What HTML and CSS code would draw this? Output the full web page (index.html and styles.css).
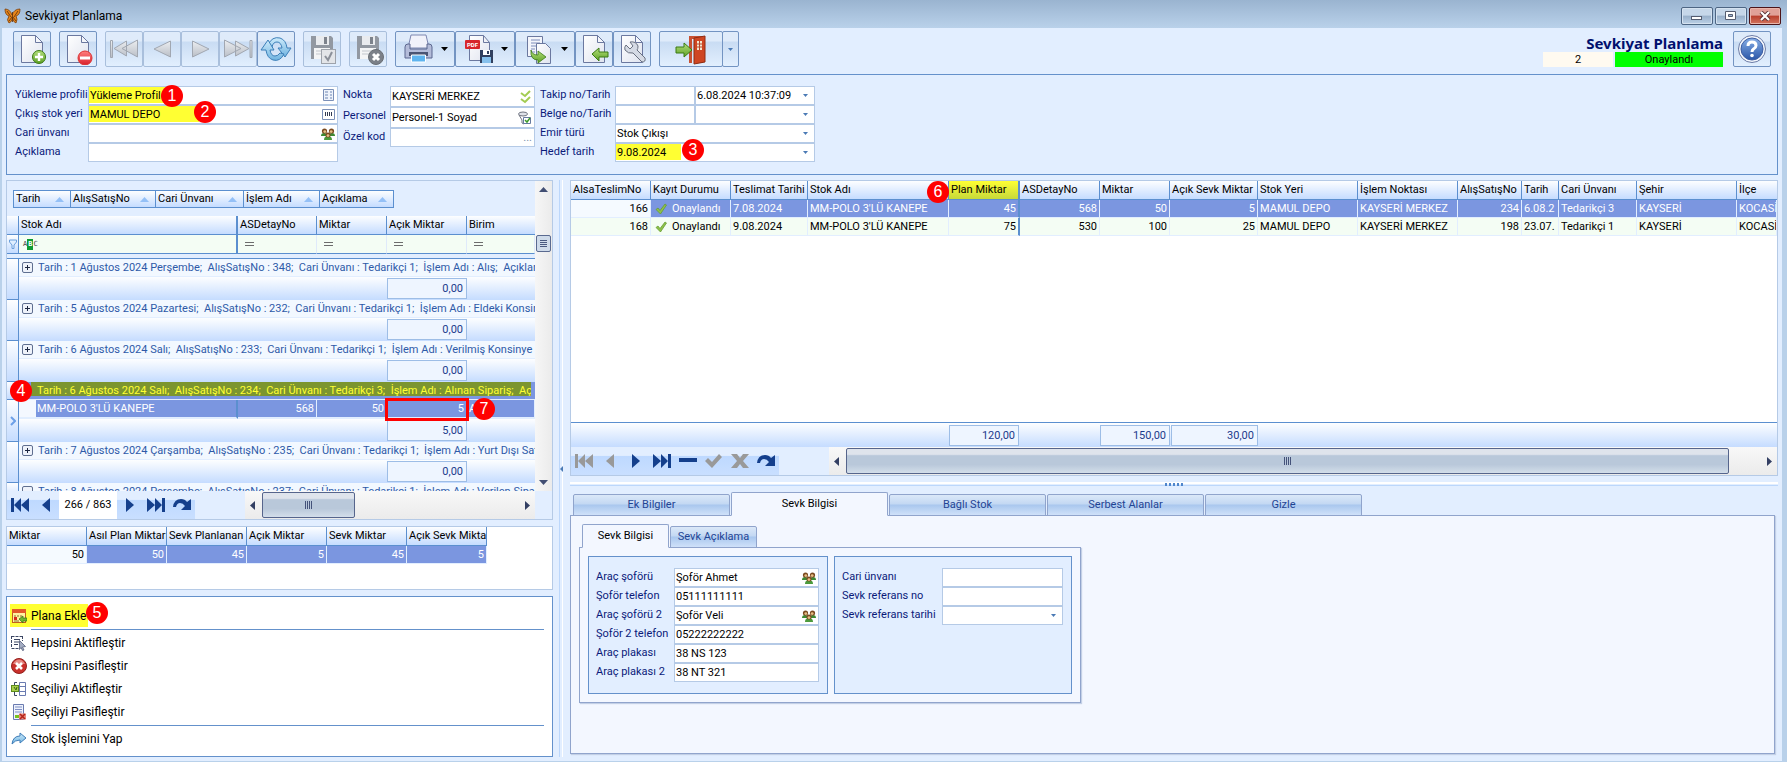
FILE: index.html
```html
<!DOCTYPE html>
<html lang="tr">
<head>
    <meta charset="UTF-8" />
    <title>Sevkiyat Planlama</title>
    <link rel="stylesheet" href="styles.css">
</head>
<body>

<!-- shared icons -->
<svg class="defs" width="0" height="0">
    <defs>
    <linearGradient id="g-page" x1="0" y1="0" x2="1" y2="1"><stop offset="0" stop-color="#fff"/><stop offset="1" stop-color="#dfe3ee"/></linearGradient>
    <linearGradient id="g-green" x1="0" y1="0" x2="0" y2="1"><stop offset="0" stop-color="#b5e07c"/><stop offset="1" stop-color="#5da025"/></linearGradient>
    <linearGradient id="g-red" x1="0" y1="0" x2="0" y2="1"><stop offset="0" stop-color="#ff8080"/><stop offset="1" stop-color="#d81f2a"/></linearGradient>
    <linearGradient id="g-blue" x1="0" y1="0" x2="0" y2="1"><stop offset="0" stop-color="#cdebfb"/><stop offset="1" stop-color="#6fb3e0"/></linearGradient>
    <linearGradient id="g-grey" x1="0" y1="0" x2="0" y2="1"><stop offset="0" stop-color="#eceef1"/><stop offset="1" stop-color="#b9bec6"/></linearGradient>
    <linearGradient id="g-help" x1="0" y1="0" x2="0" y2="1"><stop offset="0" stop-color="#86aee6"/><stop offset="1" stop-color="#2a56a8"/></linearGradient>
    </defs>
    <symbol id="i-down" viewBox="0 0 5 3"><path d="M0 0h5L2.500 3z"/></symbol>
    <symbol id="i-up" viewBox="0 0 9 5"><path d="M4.500 0L9 5H0z"/></symbol>
    <symbol id="i-page" viewBox="0 0 32 32"><path d="M5.500 2.500h14l7 7v20h-21z" fill="url(#g-page)" stroke="#6b789f"/><path d="M19.500 2.500v7h7z" fill="#f4f6fb" stroke="#6b789f"/></symbol>
    <symbol id="i-people" viewBox="0 0 14 12"><path d="M0 8q0-3 3-3t3 3z" fill="#3d8a34"/><path d="M8 8q0-3 3-3t3 3z" fill="#3d8a34"/><circle cx="3.500" cy="3" r="2.600" fill="#7a4a20"/><circle cx="10.500" cy="3" r="2.600" fill="#7a4a20"/><circle cx="3.800" cy="3.600" r="1.400" fill="#e6bd84"/><circle cx="10.200" cy="3.600" r="1.400" fill="#e6bd84"/><path d="M3 12q0-4 4-4t4 4z" fill="#4b9a3c"/><circle cx="7" cy="7" r="2.500" fill="#79491f"/><circle cx="7" cy="7.600" r="1.400" fill="#e6bd84"/></symbol>
    <symbol id="i-check" viewBox="0 0 12 12"><path d="M1 6.500l2-1.500 2 2.500L10 1l1.500 1L5.500 11z" fill="#8fc04a" stroke="#5f9a2c" stroke-width=".7"/></symbol>
    <symbol id="i-plus" viewBox="0 0 11 11"><rect x=".5" y=".5" width="10" height="10" rx="1.500" fill="#eef2fa" stroke="#5f6f90"/><path d="M3 5.500h5M5.500 3v5" stroke="#1d2740"/></symbol>
    <symbol id="i-minus" viewBox="0 0 11 11"><rect x=".5" y=".5" width="10" height="10" rx="1.500" fill="#eef2fa" stroke="#5f6f90"/><path d="M3 5.500h5" stroke="#1d2740"/></symbol>
    <symbol id="i-floppy" viewBox="0 0 32 32"><path d="M5 3h20l2 2v21H5z" fill="#9298a1"/><path d="M10 3h13v9H10z" fill="#e9ebee"/><path d="M18 4h3v7h-3z" fill="#7d838c"/><path d="M8 15h16v11H8z" fill="#f4f5f6"/><path d="M10 18h12M10 21h12" stroke="#c3c7cd"/></symbol>
    <symbol id="n-first" viewBox="0 0 20 16"><path d="M1 1h3v14H1zM4 8l7-7v14zM11 8l8-7v14z"/></symbol>
    <symbol id="n-prev" viewBox="0 0 20 16"><path d="M6 8l8-7v14z"/></symbol>
    <symbol id="n-next" viewBox="0 0 20 16"><path d="M6 1l8 7-8 7z"/></symbol>
    <symbol id="n-last" viewBox="0 0 20 16"><path d="M16 1h3v14h-3zM1 1l8 7-8 7zM9 1l7 7-7 7z"/></symbol>
    <symbol id="n-redo" viewBox="0 0 20 16"><path d="M1 10Q2 2 9 2q4 0 6 3l4-3v11H9l4-4q-2-3-5-3-3 0-4 4z"/></symbol>
    <symbol id="i-eq" viewBox="0 0 9 4"><path d="M0 .5h9M0 3.500h9" stroke="#6c6c6c"/></symbol>
</svg>

<div class="window">
    <header class="titlebar">
        <svg width="17" height="16" viewBox="0 0 17 16"><path d="M1 1q5 0 7 6Q10 1 16 1q0 6-4 7 2 3 0 7-3-1-3.500-5Q8 14 5 15 2 12 5 8 1 7 1 1z" fill="#e8861a" stroke="#7a3d0a" stroke-width=".8"/><path d="M8.500 4v10M3 3l4 6M14 3l-4 6M5 13l3-4M12 13l-3-4" stroke="#5a2c08" stroke-width=".8"/></svg>
        <span class="app-name">Sevkiyat Planlama</span>
        <button class="win-btn" aria-label="Simge durumu"><svg width="12" height="10" viewBox="0 0 12 10"><rect x=".5" y="5.500" width="10" height="3" fill="#fff" stroke="#555d70"/></svg></button>
        <button class="win-btn" aria-label="Ekranı kapla"><svg width="12" height="10" viewBox="0 0 12 10"><path d="M.5.500h10v8H.5z" fill="#fff" stroke="#555d70"/><path d="M3.500 3.500h4v2h-4z" fill="#9fb6cf" stroke="#555d70"/></svg></button>
        <button class="win-btn close" aria-label="Kapat"><svg width="12" height="10" viewBox="0 0 12 10"><path d="M2 1l8 8M10 1L2 9" stroke="#5b3034" stroke-width="4"/><path d="M2 1l8 8M10 1L2 9" stroke="#fff" stroke-width="2.200"/></svg></button>
    </header>

    <!-- toolbar -->
    <div class="toolbar">
        <button class="tool" aria-label="Yeni"><svg width="32" height="32"><use href="#i-page"/><circle cx="23" cy="24" r="6.500" fill="url(#g-green)" stroke="#3b7a14"/><path d="M23 20v8M19 24h8" stroke="#fff" stroke-width="2.400"/></svg></button>
        <button class="tool" aria-label="Sil"><svg width="32" height="32"><use href="#i-page"/><circle cx="23" cy="25" r="7" fill="url(#g-red)" stroke="#d33"/><path d="M18 25h10" stroke="#fff" stroke-width="3"/></svg></button>
        <div class="tool-group">
            <button class="tool off" aria-label="İlk"><svg width="32" height="32"><path d="M2.500 7.500h2v17h-2zM18.500 8v15L6 15.500zM29.500 7v17L14 15.500z" fill="url(#g-grey)" stroke="#a1a7b1"/></svg></button>
            <button class="tool off" aria-label="Önceki"><svg width="32" height="32"><path d="M24.500 8v16L8 16z" fill="url(#g-grey)" stroke="#a1a7b1"/></svg></button>
            <button class="tool off" aria-label="Sonraki"><svg width="32" height="32"><path d="M8.500 8v16L25 16z" fill="url(#g-grey)" stroke="#a1a7b1"/></svg></button>
            <button class="tool off" aria-label="Son"><svg width="32" height="32"><path d="M28 7.500h2v17h-2zM13.500 8v15L27 15.500zM2.500 7v17L19 15.500z" fill="url(#g-grey)" stroke="#a1a7b1"/></svg></button>
            <button class="tool" aria-label="Yenile"><svg width="32" height="32"><path d="M8 12Q12 3 20 5q6 2 7 10h4l-6 9-7-9h4q-1-6-5-6-4 0-5 5z" fill="url(#g-blue)" stroke="#3c7fb8"/><path d="M24 21q-4 8-11 6-6-2-7-10H1l7-10 6 10h-4q1 6 5 6 3 0 5-3z" fill="url(#g-blue)" stroke="#3c7fb8"/></svg></button>
        </div>
        <button class="tool off" aria-label="Kaydet"><svg width="32" height="32"><use href="#i-floppy"/><rect x="15.500" y="16.500" width="14" height="14" fill="#e3e5e8" stroke="#9ea3ab"/><path d="M19 23l3 4 4-8" fill="none" stroke="#8b9099" stroke-width="2"/></svg></button>
        <button class="tool off" aria-label="İptal"><svg width="32" height="32"><use href="#i-floppy"/><circle cx="24" cy="24" r="7.500" fill="#7b8088" stroke="#6a6f76"/><path d="M21 21l6 6M27 21l-6 6" stroke="#fff" stroke-width="3"/></svg></button>
        <div class="tool-group">
            <button class="tool wide" aria-label="Yazdır"><svg width="32" height="32"><path d="M9 2h15l3 13H6z" fill="#f1f2fa" stroke="#7d86b0"/><path d="M3 14q0-3 3-3h2v5h17v-5h2q3 0 3 3v11H3z" fill="#b4bcd9" stroke="#5b678f"/><path d="M7 19h19v4H7z" fill="#4a5473"/><path d="M9.500 22h14v7h-14z" fill="#5fb4ef" stroke="#fff"/></svg><svg class="caret" width="7" height="4"><path d="M0 0h7L3.500 4z"/></svg></button>
            <button class="tool wide" aria-label="PDF kaydet"><svg width="32" height="32"><path d="M7.500 2.500h14l6 7v18h-20z" fill="url(#g-page)" stroke="#6b789f"/><path d="M21.500 2.500v7h6" fill="none" stroke="#6b789f"/><rect x="3" y="7" width="15" height="9" rx="1" fill="#d7262c"/><text x="5" y="14" class="pdf">PDF</text><path d="M18 17h13v13H18z" fill="#31405f"/><path d="M21 17h7v5h-7z" fill="#fff"/><path d="M20 24h9v6h-9z" fill="#86c0ec"/><path d="M25 18h2v3h-2z" fill="#31405f"/></svg><svg class="caret" width="7" height="4"><path d="M0 0h7L3.500 4z"/></svg></button>
            <button class="tool wide" aria-label="Kopyala"><svg width="32" height="32"><path d="M5.500 3.500h15v20h-15z" fill="#f3f5fb" stroke="#6b789f"/><path d="M9 7h9M9 10h9M9 13h5M9 16h4M9 19h4" stroke="#7d8cba"/><path d="M14.500 10.500h9l5 5v15h-14z" fill="url(#g-page)" stroke="#6b789f"/><path d="M9 17q1 5 7 5v-4l8 6-8 6v-3Q8 27 9 17z" fill="url(#g-green)" stroke="#3b7a14" stroke-width=".8"/></svg><svg class="caret" width="7" height="4"><path d="M0 0h7L3.500 4z"/></svg></button>
            <button class="tool" aria-label="İçe aktar"><svg width="32" height="32"><use href="#i-page"/><path d="M14 21l7-6v4h9v5h-9v4z" fill="url(#g-green)" stroke="#3b7a14"/></svg></button>
            <button class="tool" aria-label="Ayarlar"><svg width="32" height="32"><use href="#i-page"/><path d="M10 12l4 4 3-3-3-4q6-1 8 4 0 3-1 4l8 8q1 4-3 4l-9-9q-5 1-8-3-1-3 1-5z" fill="#d5dae4" stroke="#6a7180"/></svg></button>
        </div>
        <div class="tool-group">
            <button class="tool exit" aria-label="Çıkış"><svg width="32" height="32"><path d="M14 3h14v27h-3V6h-8v24h-3z" fill="#c85032"/><path d="M19 5l11-2v26l-11 2z" fill="#cf4623" stroke="#8f2c13"/><path d="M22 8h5v9h-5z" fill="#f3e6cf"/><path d="M24.500 8v9M22 11h5M22 14h5" stroke="#b5482c"/><path d="M1 14h8v-4l8 7-8 7v-4H1z" fill="url(#g-green)" stroke="#3b7a14"/></svg></button>
            <button class="tool drop" aria-label="Diğer"><svg class="arrow" width="5" height="3"><use href="#i-down"/></svg></button>
        </div>
        <div class="status">
            <h1>Sevkiyat Planlama</h1>
            <div class="status-row"><span class="count">2</span><span class="state">Onaylandı</span></div>
        </div>
        <button class="tool" aria-label="Yardım"><svg width="32" height="32"><circle cx="16" cy="16" r="13.500" fill="#f4f7fc" stroke="#6b7ba6"/><circle cx="16" cy="16" r="11" fill="url(#g-help)" stroke="#3f5fa3"/><path d="M12 13q0-4 4-4t4 3.500q0 2-2.500 3.500-1.500 1-1.500 3" fill="none" stroke="#fff" stroke-width="3"/><circle cx="16" cy="22.500" r="1.800" fill="#fff"/></svg></button>
    </div>

    <!-- header form -->
    <form class="box head-form">
        <div class="form-col col-a">
            <label for="profil">Yükleme profili</label>
            <div class="field"><input id="profil" class="mark mark-s" value="Yükleme Profil"><svg width="12" height="13"><path d="M.5.5h10v11H.5z" fill="#eef3fb" stroke="#7b90b8"/><path d="M2 3h3M7 3h2M2 6h3M7 6h2M2 9h3M7 9h2" stroke="#6f86b3"/></svg><span class="badge b1">1</span></div>
            <label for="cikis">Çıkış stok yeri</label>
            <div class="field"><input id="cikis" class="mark mark-l" value="MAMUL DEPO"><svg width="13" height="11"><path d="M.5.5h12v10H.5z" fill="#fff" stroke="#7b90b8"/><path d="M3.500 3v4M5.500 3v4M7.500 3v4M9.500 3v4" stroke="#333b52"/></svg><span class="badge b2">2</span></div>
            <label for="cari">Cari ünvanı</label>
            <div class="field"><input id="cari"><svg width="14" height="12"><use href="#i-people"/></svg></div>
            <label for="aciklama">Açıklama</label>
            <div class="field"><input id="aciklama"></div>
        </div>
        <div class="form-col col-b">
            <label for="nokta">Nokta</label>
            <div class="field"><input id="nokta" value="KAYSERİ MERKEZ"><svg width="12" height="14"><path d="M1 3l4 3 5-5M1 9l4 3 5-5" fill="none" stroke="#a3cc52" stroke-width="2"/></svg></div>
            <label for="personel">Personel</label>
            <div class="field"><input id="personel" value="Personel-1 Soyad"><svg width="14" height="14"><ellipse cx="5" cy="3" rx="4.500" ry="2" fill="#dfe2e8" stroke="#6f7480"/><path d="M1 4l3 5v3l2 1V9" fill="none" stroke="#6f7480"/><path d="M5.500 6.500h7v6h-7z" fill="#fff" stroke="#667aa0"/><path d="M7 9l2 2 3-4" fill="none" stroke="#3c9a28" stroke-width="1.500"/></svg></div>
            <label for="ozel">Özel kod</label>
            <div class="field last"><input id="ozel"><span class="dots">...</span></div>
        </div>
        <div class="form-col col-c">
            <label for="takip">Takip no/Tarih</label>
            <div class="pair">
                <div class="field"><input id="takip"></div>
                <div class="field"><input aria-label="Takip tarihi" value="6.08.2024 10:37:09"><svg class="arrow" width="5" height="3"><use href="#i-down"/></svg></div>
            </div>
            <label for="belge">Belge no/Tarih</label>
            <div class="pair">
                <div class="field"><input id="belge"></div>
                <div class="field"><input aria-label="Belge tarihi"><svg class="arrow" width="5" height="3"><use href="#i-down"/></svg></div>
            </div>
            <label for="emir">Emir türü</label>
            <div class="field"><select id="emir"><option>Stok Çıkışı</option></select><svg class="arrow" width="5" height="3"><use href="#i-down"/></svg></div>
            <label for="hedef">Hedef tarih</label>
            <div class="field"><input id="hedef" class="mark mark-d" value="9.08.2024"><svg class="arrow" width="5" height="3"><use href="#i-down"/></svg><span class="badge b3">3</span></div>
        </div>
    </form>

    <main class="workspace">
        <div class="left">

            <!-- orders grouped by date -->
            <section class="panel orders">
                <div class="orders-body">
                    <div class="orders-grid">
                        <div class="group-by">
                            <button class="gb-1">Tarih<svg width="9" height="5"><use href="#i-up"/></svg></button>
                            <button class="gb-2">AlışSatışNo<svg width="9" height="5"><use href="#i-up"/></svg></button>
                            <button class="gb-3">Cari Ünvanı<svg width="9" height="5"><use href="#i-up"/></svg></button>
                            <button class="gb-4">İşlem Adı<svg width="9" height="5"><use href="#i-up"/></svg></button>
                            <button class="gb-5">Açıklama<svg width="9" height="5"><use href="#i-up"/></svg></button>
                        </div>
                        <table class="grid orders-table">
                            <colgroup><col class="w12"><col class="w218"><col class="w79"><col class="w70"><col class="w80"><col></colgroup>
                            <thead>
                                <tr><th></th><th class="fix">Stok Adı</th><th>ASDetayNo</th><th>Miktar</th><th>Açık Miktar</th><th>Birim</th></tr>
                                <tr class="filter"><td class="ind"><svg width="8" height="10"><path d="M.5 1h7v2L5 6v3.500H3V6L.5 3z" fill="#dfeeff" stroke="#6da0dc"/></svg></td><td class="fix"><span class="abc">A<b>B</b>C</span></td><td><svg width="9" height="4"><use href="#i-eq"/></svg></td><td><svg width="9" height="4"><use href="#i-eq"/></svg></td><td><svg width="9" height="4"><use href="#i-eq"/></svg></td><td><svg width="9" height="4"><use href="#i-eq"/></svg></td></tr>
                            </thead>
                            <tbody>
                                <tr class="spacer"><td colspan="6"></td></tr>
                                <tr class="group"><td class="ind" rowspan="2"></td><td colspan="5"><svg width="11" height="11"><use href="#i-plus"/></svg>Tarih : 1 Ağustos 2024 Perşembe;&nbsp; AlışSatışNo : 348;&nbsp; Cari Ünvanı : Tedarikçi 1;&nbsp; İşlem Adı : Alış;&nbsp; Açıklama</td></tr>
                                <tr class="foot"><td colspan="3"></td><td><span class="sum">0,00</span></td><td></td></tr>
                                <tr class="group"><td class="ind" rowspan="2"></td><td colspan="5"><svg width="11" height="11"><use href="#i-plus"/></svg>Tarih : 5 Ağustos 2024 Pazartesi;&nbsp; AlışSatışNo : 232;&nbsp; Cari Ünvanı : Tedarikçi 1;&nbsp; İşlem Adı : Eldeki Konsinye</td></tr>
                                <tr class="foot"><td colspan="3"></td><td><span class="sum">0,00</span></td><td></td></tr>
                                <tr class="group"><td class="ind" rowspan="2"></td><td colspan="5"><svg width="11" height="11"><use href="#i-plus"/></svg>Tarih : 6 Ağustos 2024 Salı;&nbsp; AlışSatışNo : 233;&nbsp; Cari Ünvanı : Tedarikçi 1;&nbsp; İşlem Adı : Verilmiş Konsinye Satış</td></tr>
                                <tr class="foot"><td colspan="3"></td><td><span class="sum">0,00</span></td><td></td></tr>
                                <tr class="group open"><td class="ind"><span class="badge b4">4</span></td><td colspan="5"><div class="olive">Tarih : 6 Ağustos 2024 Salı;&nbsp; AlışSatışNo : 234;&nbsp; Cari Ünvanı : Tedarikçi 3;&nbsp; İşlem Adı : Alınan Sipariş;&nbsp; Açıklama</div></td></tr>
                                <tr class="detail"><td class="ind" rowspan="2"><svg width="6" height="10"><path d="M1 1l4 4-4 4" fill="none" stroke="#6da0e8" stroke-width="2"/></svg></td><td class="fix"><div class="name">MM-POLO 3'LÜ KANEPE</div></td><td>568</td><td>50</td><td class="framed">5<span class="badge b7">7</span></td><td class="unit">A</td></tr>
                                <tr class="foot"><td colspan="3"></td><td><span class="sum">5,00</span></td><td></td></tr>
                                <tr class="group"><td class="ind" rowspan="2"></td><td colspan="5"><svg width="11" height="11"><use href="#i-plus"/></svg>Tarih : 7 Ağustos 2024 Çarşamba;&nbsp; AlışSatışNo : 235;&nbsp; Cari Ünvanı : Tedarikçi 1;&nbsp; İşlem Adı : Yurt Dışı Satış</td></tr>
                                <tr class="foot"><td colspan="3"></td><td><span class="sum">0,00</span></td><td></td></tr>
                                <tr class="group"><td class="ind"></td><td colspan="5"><svg width="11" height="11"><use href="#i-minus"/></svg>Tarih : 8 Ağustos 2024 Perşembe;&nbsp; AlışSatışNo : 237;&nbsp; Cari Ünvanı : Tedarikçi 1;&nbsp; İşlem Adı : Verilen Sipariş</td></tr>
                            </tbody>
                        </table>
                    </div>
                    <div class="vscroll">
                        <svg width="9" height="5" viewBox="0 0 9 5"><path d="M4.500 0L9 5H0z"/></svg>
                        <span class="vthumb"></span>
                        <svg width="9" height="5" viewBox="0 0 9 5"><path d="M0 0h9L4.500 5z"/></svg>
                    </div>
                </div>
                <div class="nav-row">
                    <div class="navigator">
                        <button aria-label="İlk kayıt"><svg width="20" height="16"><use href="#n-first"/></svg></button>
                        <button aria-label="Önceki kayıt"><svg width="20" height="16"><use href="#n-prev"/></svg></button>
                        <span class="pos">266 / 863</span>
                        <button aria-label="Sonraki kayıt"><svg width="20" height="16"><use href="#n-next"/></svg></button>
                        <button aria-label="Son kayıt"><svg width="20" height="16"><use href="#n-last"/></svg></button>
                        <button aria-label="Yenile"><svg width="20" height="16"><use href="#n-redo"/></svg></button>
                    </div>
                    <div class="hscroll hs-left">
                        <svg width="5" height="9"><path d="M5 0v9L0 4.500z"/></svg>
                        <span class="hthumb"></span>
                        <svg width="5" height="9"><path d="M0 0v9l5-4.500z"/></svg>
                    </div>
                    <span class="corner"></span>
                </div>
            </section>

            <!-- quantity totals -->
            <section class="panel totals">
                <table class="grid totals-table">
                    <thead><tr><th>Miktar</th><th>Asıl Plan Miktarı</th><th>Sevk Planlanan Miktar</th><th>Açık Miktar</th><th>Sevk Miktar</th><th>Açık Sevk Miktar</th></tr></thead>
                    <tbody><tr class="sel"><td class="focus">50</td><td>50</td><td>45</td><td>5</td><td>45</td><td>5</td></tr></tbody>
                </table>
            </section>

            <!-- actions -->
            <nav class="actions">
                <button class="plan"><svg width="16" height="16"><rect x="1.500" y="1.500" width="13" height="13" fill="#fff2a0" stroke="#c2601c"/><path d="M1 1h14v4H1z" fill="#e2582a"/><path d="M3 8h2M6 8h2M3 11h2M9 8h2M3 13h5" stroke="#8a6d2b"/><path d="M3 9h3v3H3z" fill="#d92c1e"/><path d="M8 11l4-3v2h4v3h-4v2z" fill="#6db52f" stroke="#356f12" stroke-width=".7"/></svg>Plana Ekle<span class="badge b5">5</span></button>
                <hr>
                <button><svg width="16" height="16"><path d="M.5 1.500h11M.5 13.500h8M.5 1v12M11.500 1v5" stroke="#3b4663" stroke-dasharray="3 1"/><path d="M3 4.500h6M3 7h6M3 9.500h4" stroke="#3b4663"/><path d="M8.500 5.500l6 6-3 .5 1.500 3-1.500.5-1.500-3-1.500 2z" fill="#a3acc2" stroke="#56607c" stroke-width=".8"/></svg>Hepsini Aktifleştir</button>
                <button><svg width="16" height="16"><circle cx="8" cy="8" r="7.500" fill="#c9302c" stroke="#93211d"/><path d="M2 6q2-4.500 6-4.500T14 6z" fill="#e58a84"/><path d="M5 5l6 6M11 5l-6 6" stroke="#fff" stroke-width="2.600"/></svg>Hepsini Pasifleştir</button>
                <button><svg width="16" height="16"><path d="M8.500 1.500h6v13h-6zM8.500 5.500h6M8.500 10.500h6" fill="#fff" stroke="#6a7bb0"/><path d="M6 1.500H3.500v13H6" fill="none" stroke="#3b4663"/><rect x=".5" y="4.500" width="7" height="6" fill="#a9cf4c" stroke="#5c8a1d"/><path d="M3 6l2 3 1-3" fill="none" stroke="#3e6610"/></svg>Seçiliyi Aktifleştir</button>
                <button><svg width="16" height="16"><path d="M2.500.5h10v15h-10z" fill="#eef2fc" stroke="#6a7bb0"/><path d="M4 3h7M4 5.500h7M4 8h7" stroke="#7f8fc4"/><path d="M4 11h5v3H4z" fill="#79c21f"/><path d="M8 9.500h7v6H8z" fill="#e98a7c"/><path d="M9 10l5 5M14 10l-5 5" stroke="#b3241a" stroke-width="1.500"/></svg>Seçiliyi Pasifleştir</button>
                <hr>
                <button><svg width="16" height="16"><path d="M1 13Q2 5 9 5V2l6 5-6 5V9Q4 9 1 13z" fill="url(#g-blue)" stroke="#3f7db8"/></svg>Stok İşlemini Yap</button>
            </nav>
        </div>

        <div class="splitter-v"><svg width="3" height="6"><path d="M3 0v6L0 3z"/></svg></div>

        <div class="right">

            <!-- shipment plan grid -->
            <section class="panel plan-grid">
                <div class="plan-body">
                    <table class="grid plan-table">
                        <colgroup><col class="w80"><col class="w80"><col class="w77"><col class="w141"><col class="w71"><col class="w80"><col class="w70"><col class="w88"><col class="w100"><col class="w100"><col class="w64"><col class="w37"><col class="w78"><col class="w100"><col></colgroup>
                        <thead><tr><th>AlsaTeslimNo</th><th>Kayıt Durumu</th><th>Teslimat Tarihi</th><th>Stok Adı</th><th class="hot fix">Plan Miktar<span class="badge b6">6</span></th><th>ASDetayNo</th><th>Miktar</th><th>Açık Sevk Miktar</th><th>Stok Yeri</th><th>İşlem Noktası</th><th>AlışSatışNo</th><th>Tarih</th><th>Cari Ünvanı</th><th>Şehir</th><th>İlçe</th></tr></thead>
                        <tbody>
                            <tr class="sel"><td class="focus">166</td><td class="t"><svg width="12" height="12"><use href="#i-check"/></svg>Onaylandı</td><td class="t">7.08.2024</td><td class="t">MM-POLO 3'LÜ KANEPE</td><td class="fix">45</td><td>568</td><td>50</td><td>5</td><td class="t">MAMUL DEPO</td><td class="t">KAYSERİ MERKEZ</td><td>234</td><td class="t">6.08.2</td><td class="t">Tedarikçi 3</td><td class="t">KAYSERİ</td><td class="t">KOCASİNAN</td></tr>
                            <tr><td>168</td><td class="t"><svg width="12" height="12"><use href="#i-check"/></svg>Onaylandı</td><td class="t">9.08.2024</td><td class="t">MM-POLO 3'LÜ KANEPE</td><td class="fix">75</td><td>530</td><td>100</td><td>25</td><td class="t">MAMUL DEPO</td><td class="t">KAYSERİ MERKEZ</td><td>198</td><td class="t">23.07.</td><td class="t">Tedarikçi 1</td><td class="t">KAYSERİ</td><td class="t">KOCASİNAN</td></tr>
                        </tbody>
                    </table>
                </div>
                <div class="plan-foot">
                    <span class="sum s-plan">120,00</span>
                    <span class="sum s-miktar">150,00</span>
                    <span class="sum s-acik">30,00</span>
                </div>
                <div class="nav-row">
                    <div class="navigator nav-plan">
                        <button disabled aria-label="İlk kayıt"><svg width="20" height="16"><use href="#n-first"/></svg></button>
                        <button disabled aria-label="Önceki kayıt"><svg width="20" height="16"><use href="#n-prev"/></svg></button>
                        <button aria-label="Sonraki kayıt"><svg width="20" height="16"><use href="#n-next"/></svg></button>
                        <button aria-label="Son kayıt"><svg width="20" height="16"><use href="#n-last"/></svg></button>
                        <button aria-label="Kaydı sil"><svg width="20" height="16"><path d="M1 5h18v4H1z"/></svg></button>
                        <button disabled aria-label="Onayla"><svg width="20" height="16"><path d="M1 8l3-3 4 4 7-8 3 3L8 15z"/></svg></button>
                        <button disabled aria-label="Vazgeç"><svg width="20" height="16"><path d="M1 1h6l3 4 3-4h6l-6 7 6 7h-6l-3-4-3 4H1l6-7z"/></svg></button>
                        <button aria-label="Yenile"><svg width="20" height="16"><use href="#n-redo"/></svg></button>
                    </div>
                    <div class="hscroll hs-right">
                        <svg width="5" height="9"><path d="M5 0v9L0 4.500z"/></svg>
                        <span class="hthumb"></span>
                        <svg width="5" height="9"><path d="M0 0v9l5-4.500z"/></svg>
                    </div>
                </div>
            </section>

            <div class="splitter-h"><svg width="19" height="3"><path d="M0 1.500h19" stroke="#4f86cc" stroke-width="3" stroke-dasharray="2 2"/></svg></div>

            <!-- shipment details -->
            <div class="tabs">
                <button class="tab">Ek Bilgiler</button>
                <button class="tab active">Sevk Bilgisi</button>
                <button class="tab">Bağlı Stok</button>
                <button class="tab">Serbest Alanlar</button>
                <button class="tab">Gizle</button>
            </div>
            <section class="tab-page">
                <div class="tabs inner">
                    <button class="tab active">Sevk Bilgisi</button>
                    <button class="tab">Sevk Açıklama</button>
                </div>
                <div class="inner-page">
                    <div class="box form-col col-d">
                        <label for="sofor1">Araç şoförü</label>
                        <div class="field"><input id="sofor1" value="Şoför Ahmet"><svg width="14" height="12"><use href="#i-people"/></svg></div>
                        <label for="tel1">Şoför telefon</label>
                        <div class="field"><input id="tel1" value="05111111111"></div>
                        <label for="sofor2">Araç şoförü 2</label>
                        <div class="field"><input id="sofor2" value="Şoför Veli"><svg width="14" height="12"><use href="#i-people"/></svg></div>
                        <label for="tel2">Şoför 2 telefon</label>
                        <div class="field"><input id="tel2" value="05222222222"></div>
                        <label for="plaka1">Araç plakası</label>
                        <div class="field"><input id="plaka1" value="38 NS 123"></div>
                        <label for="plaka2">Araç plakası 2</label>
                        <div class="field"><input id="plaka2" value="38 NT 321"></div>
                    </div>
                    <div class="box form-col col-e">
                        <label for="cari2">Cari ünvanı</label>
                        <div class="field"><input id="cari2"></div>
                        <label for="refno">Sevk referans no</label>
                        <div class="field"><input id="refno"></div>
                        <label for="reftarih">Sevk referans tarihi</label>
                        <div class="field"><input id="reftarih"><svg class="arrow" width="5" height="3"><use href="#i-down"/></svg></div>
                    </div>
                </div>
            </section>
        </div>
    </main>
</div>
</body>
</html>
```

FILE: styles.css
```css
* {
 box-sizing: border-box;
}

body {
 margin: 0;
 font-family: Roboto, "Noto Sans", sans-serif;
 font-size: 11px;
 line-height: 14px;
 color: #000;
 background: #b9d1ea;
}

button,
input,
select {
 font: inherit;
 color: inherit;
 margin: 0;
 padding: 0;
 border: none;
 background: none;
}

svg {
 display: block;
 flex: none;
}

.defs {
 position: absolute;
}

.window {
 display: flex;
 flex-direction: column;
 height: 100vh;
 min-height: 700px;
 padding: 0 5px 1px 2px;
}

/* title bar */
.titlebar {
 display: flex;
 flex: none;
 align-items: center;
 gap: 2px;
 height: 28px;
 margin: 0 -5px 0 -2px;
 padding: 4px 6px 0 4px;
 background: linear-gradient(#9ab4d0, #b9d1ea);
}

.app-name {
 flex: 1;
 margin-left: 2px;
 font-size: 12px;
}

.win-btn {
 display: flex;
 align-items: center;
 justify-content: center;
 width: 32px;
 height: 18px;
 border: 1px solid #4d6583;
 border-radius: 2px;
 background: linear-gradient(#c6d7e9 45%, #98b0ca 50%, #bcd1e7);
 box-shadow: inset 0 0 0 1px #d5e2f0;
}

.win-btn.close {
 border-color: #4c1418;
 background: linear-gradient(#e0a197 45%, #b93f2c 50%, #d2745e);
 box-shadow: inset 0 0 0 1px #e9b5aa;
}

/* toolbar */
.toolbar {
 display: flex;
 flex: none;
 gap: 8px;
 height: 46px;
 padding: 3px 11px 7px;
 background: #e2eeff;
}

.tool-group {
 display: flex;
}

.tool {
 display: flex;
 align-items: center;
 justify-content: center;
 width: 38px;
 height: 36px;
 border: 1px solid #7394c2;
 border-radius: 2px;
 background: linear-gradient(#dfebfa 26%, #c9dcf3 30%, #e2effe);
}

.tool.off {
 border-color: #a9bfdc;
}

.tool.wide {
 width: 60px;
 gap: 7px;
}

.tool.exit {
 width: 64px;
}

.tool.drop {
 width: 17px;
 margin-left: -1px;
}

.pdf {
 font-size: 6px;
 font-weight: bold;
 fill: #fff;
}

.arrow {
 fill: #4a7ab5;
}

.status {
 width: 180px;
 margin: 3px 2px 0 auto;
}

.status h1 {
 margin: 0;
 font-family: "Noto Sans", "Open Sans", sans-serif;
 font-size: 15px;
 line-height: 18px;
 text-align: right;
 color: #00106e;
}

.status-row {
 display: flex;
 gap: 2px;
 line-height: 15px;
 text-align: center;
}

.count {
 flex: 70;
 background: #fffaf0;
}

.state {
 flex: 108;
 background: #0f0;
}

/* forms */
.box {
 border: 1px solid #6491cb;
 background: #e2eeff;
}

.head-form {
 display: flex;
 flex: none;
 gap: 5px;
 height: 101px;
 padding: 11px 8px;
 outline: 4px solid #e2eeff;
 margin: 0 4px;
}

.form-col {
 display: grid;
 grid-auto-rows: 19px;
 align-content: start;
}

.form-col label {
 line-height: 18px;
 color: #0a1a7a;
 white-space: nowrap;
}

.col-a { grid-template-columns: 73px 250px; }
.col-b { grid-template-columns: 47px 145px; grid-auto-rows: 21px; }
.col-c { grid-template-columns: 75px 200px; }

.col-b .last {
 height: 19px;
}

.field {
 position: relative;
 display: flex;
 align-items: center;
 min-width: 0;
 padding-right: 2px;
 border: 1px solid #b5cae6;
 background: #fff;
}

.field input,
.field select {
 flex: 1;
 min-width: 0;
 height: 100%;
 padding: 0 1px;
 appearance: none;
 outline: none;
}

.field .arrow {
 margin-right: 4px;
}

.pair {
 display: grid;
 grid-template-columns: 80px 120px;
}

.dots {
 color: #7d90ad;
}

.field .mark {
 background: no-repeat linear-gradient(#ff3, #ff3);
}

.field .mark-s { background-size: 80px 16px; }
.field .mark-l { background-size: 110px 16px; }
.field .mark-d { background-size: 65px 16px; }

/* numbered callouts */
.badge {
 position: absolute;
 width: 22px;
 height: 22px;
 border-radius: 50%;
 background: #f00;
 color: #fff;
 font: 16px/22px "Liberation Sans", Arial, sans-serif;
 text-align: center;
 z-index: 2;
}

.b1 { left: 72px; top: -2px; }
.b2 { left: 105px; top: -5px; }
.b3 { left: 66px; top: -5px; }
.b4 { left: 3px; top: -2px; }
.b5 { left: 76px; top: -2px; }
.b6 { left: -22px; top: 0; }
.b7 { left: 86px; top: -2px; }

/* main area */
.workspace {
 display: grid;
 grid-template-columns: 547px 17px minmax(0, 1fr);
 grid-template-rows: minmax(0, 1fr);
 flex: 1;
 min-height: 0;
 padding: 5px 4px 4px;
 background: #e2eeff;
}

.left,
.right {
 display: flex;
 flex-direction: column;
 min-height: 0;
}

.left {
 gap: 6px;
}

.panel {
 border: 1px solid #b5cae6;
 background: #fff;
}

/* grids */
.grid {
 table-layout: fixed;
 border-spacing: 0;
 width: 100%;
}

.grid th,
.grid td {
 padding: 0 2px;
 white-space: nowrap;
 overflow: hidden;
}

.grid th {
 height: 19px;
 border-right: 1px solid #5b8fcf;
 border-bottom: 1px solid #5b8fcf;
 background: linear-gradient(#fdfeff, #c5dcff);
 font-weight: normal;
 text-align: left;
}

.grid th:last-child {
 border-right: none;
}

.grid .fix {
 border-right: 2px solid #5b8fcf;
}

.w12 { width: 12px; }
.w37 { width: 37px; }
.w64 { width: 64px; }
.w70 { width: 70px; }
.w71 { width: 71px; }
.w77 { width: 77px; }
.w78 { width: 78px; }
.w79 { width: 79px; }
.w80 { width: 80px; }
.w88 { width: 88px; }
.w100 { width: 100px; }
.w141 { width: 141px; }
.w218 { width: 219px; }

/* orders */
.orders {
 flex: 1;
 display: flex;
 flex-direction: column;
 min-height: 0;
 background: #e2eeff;
}

.orders-body {
 display: flex;
 flex: 1;
 min-height: 0;
}

.orders-grid {
 flex: 1;
 min-width: 0;
 overflow: hidden;
}

.group-by {
 display: flex;
 padding: 9px 6px 8px;
}

.group-by button {
 display: flex;
 align-items: center;
 justify-content: space-between;
 height: 18px;
 padding: 0 6px 0 2px;
 border: 1px solid #5b8fcf;
 border-left-width: 0;
 background: linear-gradient(#fdfeff, #c5dcff);
}

.group-by .gb-1 { width: 58px; border-left-width: 1px; }
.gb-2 { width: 85px; }
.gb-3 { width: 88px; }
.gb-4 { width: 76px; }
.gb-5 { width: 74px; }

.group-by svg {
 fill: #94c0f7;
}

.filter td {
 height: 19px;
 border-right: 1px solid #dfeafa;
 border-bottom: 1px solid #5b8fcf;
 background: #f4fdf4;
}

.filter td > svg {
 margin-left: 5px;
}

.grid .ind {
 padding: 0;
 border-right: 1px solid #5b8fcf;
 border-bottom: 1px solid #5b8fcf;
 background: linear-gradient(#fdfeff, #c5dcff);
}

.ind > svg {
 margin: 0 auto;
}

.filter .ind > svg {
 margin-left: 2px;
}

.abc {
 display: block;
 padding-left: 2px;
 font: 7px/11px "DejaVu Sans Mono", monospace;
 color: #444;
}

.abc b {
 display: inline-block;
 padding: 0 1px;
 background: #0f9a33;
 color: #fff;
}

.spacer td {
 height: 5px;
 border-bottom: 1px solid #5b8fcf;
}

.group td {
 height: 18px;
 border-bottom: 1px solid #e2eeff;
 background: #f2f8ff;
 color: #2e5aa8;
 line-height: 17px;
}

.group td > svg {
 float: left;
 margin: 3px 5px 0 1px;
}

.foot td {
 height: 23px;
 padding: 0;
 background: linear-gradient(#fdfeff, #c5dcff);
}

.sum {
 display: block;
 height: 21px;
 padding-right: 3px;
 border: 1px solid #9dbde6;
 background: #eef5ff;
 color: #1b3b8c;
 line-height: 20px;
 text-align: right;
}

.group.open td,
.detail td {
 background: #7b96e0;
 color: #fff;
}

.group.open td:last-child {
 padding: 0 4px 0 12px;
}

.group.open .ind,
.detail .ind {
 position: relative;
 overflow: visible;
 background: linear-gradient(#fdfeff, #c5dcff);
}

.olive {
 overflow: hidden;
 background: linear-gradient(#7c9530 14px, transparent 14px);
 color: #ff3;
 line-height: 17px;
 padding-left: 6px;
}

.detail td {
 height: 19px;
 border-right: 1px solid #e2eeff;
 border-bottom: 2px solid #e2eeff;
 line-height: 16px;
 text-align: right;
}

.detail td.fix {
 padding: 0 0 0 18px;
 background: linear-gradient(90deg, #f4f8ff 17px, #7b96e0 17px);
 text-align: left;
}

.detail td.framed {
 position: relative;
 overflow: visible;
 outline: 3px solid #f00;
 outline-offset: -1px;
}

.detail td.unit {
 text-align: left;
}

/* scrollbars */
.vscroll {
 display: flex;
 flex-direction: column;
 align-items: center;
 width: 17px;
 padding: 6px 0;
 background: linear-gradient(90deg, #f6f6f6, #ebebeb);
 fill: #414e73;
}

.vthumb {
 width: 15px;
 height: 17px;
 margin: 43px 0 auto;
 border: 1px solid #5a6a90;
 border-radius: 2px;
 background: repeating-linear-gradient(#4a5a80 0 1px, transparent 1px 2px) no-repeat center / 7px 7px, #cfdbea;
}

.nav-row {
 display: flex;
 flex: none;
 height: 28px;
}

.navigator {
 display: flex;
 align-items: center;
 width: 188px;
 background: linear-gradient(#e2eeff 30%, #bed9ff 34%, #c9dfff);
}

.navigator button {
 display: flex;
 align-items: center;
 justify-content: center;
 width: 26px;
 height: 100%;
 fill: #143f8c;
}

.navigator button:disabled {
 fill: #999;
}

.pos {
 width: 58px;
 line-height: 28px;
 background: #fff;
 text-align: center;
}

.nav-plan {
 width: 208px;
}

.hscroll {
 display: flex;
 align-items: center;
 flex: 1;
 min-width: 0;
 padding: 0 5px;
 background: linear-gradient(#f8f8f8, #ebebeb);
 fill: #333f63;
}

.hs-left,
.hs-right {
 margin-left: 50px;
}

.hthumb {
 height: 26px;
 width: 93px;
 margin: 0 auto 0 7px;
 border: 1px solid #56658c;
 border-radius: 2px;
 background: repeating-linear-gradient(90deg, #44527a 0 1px, transparent 1px 2px) no-repeat center / 8px 8px, linear-gradient(#dfe4ec 22%, #b9c8da 28%, #b9c8da 65%, #d3deea);
}

.hs-right .hthumb {
 flex: 1;
 margin-right: 38px;
}

.corner {
 width: 17px;
}

/* totals */
.totals {
 flex: none;
 height: 64px;
}

.totals-table {
 width: 480px;
}

.totals-table th:last-child {
 border-right: 1px solid #5b8fcf;
}

.totals-table td,
.plan-table td {
 height: 18px;
 border-right: 1px solid #e2eeff;
 border-bottom: 1px solid #e2eeff;
 background: #f4fdf4;
 text-align: right;
}

.grid .sel td {
 background: #7b96e0;
 color: #fff;
}

.grid .sel .focus {
 background: #f5faff;
 color: #000;
}

/* actions */
.actions {
 flex: none;
 height: 161px;
 padding: 7px 8px 0 3px;
 border: 1px solid #6491cb;
 background: #fff;
 font-size: 12px;
}

.actions button {
 position: relative;
 display: flex;
 align-items: center;
 gap: 4px;
 height: 23px;
 padding: 0 2px 0 1px;
}

.actions .plan {
 background: #ff3;
}

.actions hr {
 margin: 2px 0 1px 21px;
 border: none;
 border-top: 1px solid #6491cb;
}

/* splitters */
.splitter-v {
 display: flex;
 align-items: center;
 width: 4px;
 margin-left: 6px;
 border-left: 1px solid #bcd7fb;
 border-right: 1px solid #fff;
 fill: #4a7ab5;
}

.splitter-h {
 display: flex;
 flex: none;
 align-items: center;
 justify-content: center;
 height: 4px;
 margin: 6px 0;
 border-top: 2px solid #fff;
 border-bottom: 1px solid #bcd7fb;
}

/* plan grid */
.plan-grid {
 flex: 1;
 display: flex;
 flex-direction: column;
 min-height: 0;
 background: #e2eeff;
}

.plan-body {
 flex: 1;
 min-height: 0;
 background: #fff;
 overflow: hidden;
}

.plan-table td.t {
 text-align: left;
}

.plan-table td > svg {
 float: left;
 margin: 1px 5px 0 2px;
}

.plan-table .hot {
 position: relative;
 overflow: visible;
 background: linear-gradient(#ff3, #c6d93a);
}

.plan-foot {
 display: flex;
 flex: none;
 height: 25px;
 padding: 2px 0 0 378px;
 border-top: 1px solid #5b8fcf;
 background: linear-gradient(#fdfeff, #c5dcff);
}

.s-plan { width: 70px; }
.s-miktar { width: 70px; margin-left: 81px; }
.s-acik { width: 87px; margin-left: 1px; }

/* tabs */
.tabs {
 display: flex;
 flex: none;
 align-items: flex-end;
 gap: 1px;
 height: 24px;
 padding-left: 3px;
 margin-bottom: -1px;
 position: relative;
}

.tab {
 width: 157px;
 height: 22px;
 border: 1px solid #90a4cc;
 border-radius: 2px 2px 0 0;
 background: linear-gradient(#dbe8f8, #c3d8f3 45%, #a9c7ee 50%, #cfe1f9);
 color: #1f4494;
}

.tab.active {
 height: 24px;
 border-bottom-color: #f3f7ff;
 background: #f3f7ff;
 color: #000;
}

.tab-page {
 flex: none;
 height: 239px;
 margin: 0 3px 3px 0;
 padding: 8px;
 border: 1px solid #90a4cc;
 background: #f3f7ff;
 box-shadow: 1px 1px 1px #c3d0e6;
}

.inner .tab {
 width: 87px;
}

.inner-page {
 display: flex;
 gap: 6px;
 width: 502px;
 height: 156px;
 padding: 8px;
 border: 1px solid #90a4cc;
 background: #f3f7ff;
 box-shadow: 1px 1px 1px #c3d0e6;
}

.inner-page .box {
 padding: 11px 7px;
}

.col-d {
 width: 240px;
 grid-template-columns: 78px 145px;
}

.col-e {
 width: 238px;
 grid-template-columns: 100px 121px;
}
```
